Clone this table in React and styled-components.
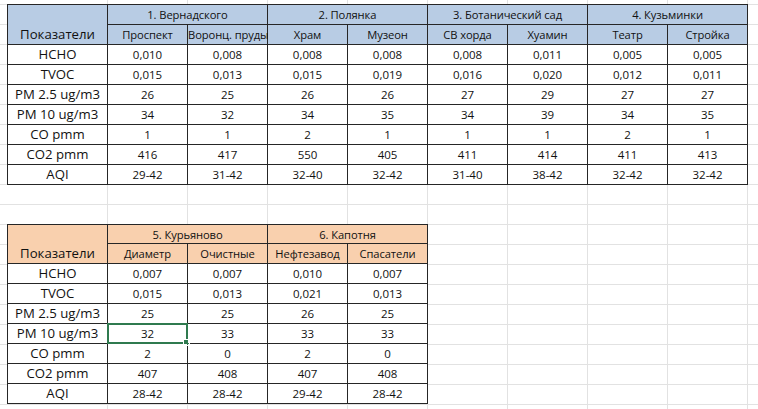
import styled, { createGlobalStyle } from "styled-components";

const GlobalStyle = createGlobalStyle`
  html, body {
    margin: 0;
    padding: 0;
    background: #fff;
  }
`;

const grid = "#e2e2e2";

const Sheet = styled.div`
  width: 758px;
  height: 409px;
  overflow: hidden;
  box-sizing: border-box;
  padding: 4px 0 0 7px;
  display: flex;
  flex-direction: column;
  align-items: flex-start;
  gap: 39px;
  background-color: #fff;
  background-image: linear-gradient(to bottom, ${grid} 1px, transparent 1px),
    linear-gradient(to right, #fff 107px, transparent 107px),
    linear-gradient(to right, ${grid} 1px, transparent 1px);
  background-size: 80px 20px, 100% 100%, 80px 20px;
  background-position: 0 4px, 0 0, 27px 0;
  background-repeat: repeat, no-repeat, repeat;
  font-family: "Open Sans", "Noto Sans", sans-serif;
  color: #111;
`;

const Table = styled.table`
  border-collapse: collapse;
  table-layout: fixed;
  width: ${(p) => 100 + p.$cols * 80}px;
  background: #fff;
`;

const Col = styled.col`
  width: ${(p) => (p.$wide ? "100px" : "80px")};
`;

const Row = styled.tr`
  height: ${(p) => p.$h || 20}px;
`;

const Cell = styled.td`
  position: relative;
  border: 1px solid #262626;
  padding: 0;
  text-align: center;
  vertical-align: middle;
  white-space: nowrap;
  font-weight: 400;
  font-size: ${(p) => (p.$label ? "13.2px" : "11.5px")};
  line-height: 17px;
  background: ${(p) => p.$bg || "#fff"};
`;

const HeadCell = styled(Cell)`
  font-size: ${(p) => (p.$label ? "13.2px" : "11.2px")};
  letter-spacing: ${(p) => (p.$label ? "0" : "-0.1px")};
  vertical-align: ${(p) => (p.$bottom ? "bottom" : "middle")};
  padding-bottom: ${(p) => (p.$bottom ? "1px" : "0")};
`;

const Selection = styled.span`
  position: absolute;
  inset: -1px;
  border: 2px solid #2f7a4f;
  pointer-events: none;

  &::after {
    content: "";
    position: absolute;
    right: -4px;
    bottom: -4px;
    width: 5px;
    height: 5px;
    background: #2f7a4f;
    border: 1px solid #fff;
  }
`;

const labels = ["HCHO", "TVOC", "PM 2.5 ug/m3", "PM 10 ug/m3", "CO pmm", "CO2 pmm", "AQI"];

const tableA = {
  bg: "#b8cce4",
  groups: [
    ["1. Вернадского", "Проспект", "Воронц. пруды"],
    ["2. Полянка", "Храм", "Музеон"],
    ["3. Ботанический сад", "СВ хорда", "Хуамин"],
    ["4. Кузьминки", "Театр", "Стройка"],
  ],
  rows: [
    ["0,010", "0,008", "0,008", "0,008", "0,008", "0,011", "0,005", "0,005"],
    ["0,015", "0,013", "0,015", "0,019", "0,016", "0,020", "0,012", "0,011"],
    ["26", "25", "26", "26", "27", "29", "27", "27"],
    ["34", "32", "34", "35", "34", "39", "34", "35"],
    ["1", "1", "2", "1", "1", "1", "2", "1"],
    ["416", "417", "550", "405", "411", "414", "411", "413"],
    ["29-42", "31-42", "32-40", "32-42", "31-40", "38-42", "32-42", "32-42"],
  ],
};

const tableB = {
  bg: "#f9d0ae",
  firstRow: 19,
  selected: [3, 0],
  groups: [
    ["5. Курьяново", "Диаметр", "Очистные"],
    ["6. Капотня", "Нефтезавод", "Спасатели"],
  ],
  rows: [
    ["0,007", "0,007", "0,010", "0,007"],
    ["0,015", "0,013", "0,021", "0,013"],
    ["25", "25", "26", "25"],
    ["32", "33", "33", "33"],
    ["2", "0", "2", "0"],
    ["407", "408", "407", "408"],
    ["28-42", "28-42", "29-42", "28-42"],
  ],
};

function AirTable({ data }) {
  const sel = data.selected;
  return (
    <Table $cols={data.groups.length * 2}>
      <colgroup>
        <Col $wide />
        {data.groups.flatMap((g) => [<Col key={g[1]} />, <Col key={g[2]} />])}
      </colgroup>
      <thead>
        <Row $h={data.firstRow}>
          <HeadCell as="th" rowSpan={2} $label $bottom $bg={data.bg}>
            Показатели
          </HeadCell>
          {data.groups.map((g) => (
            <HeadCell as="th" key={g[0]} colSpan={2} $bg={data.bg}>
              {g[0]}
            </HeadCell>
          ))}
        </Row>
        <Row>
          {data.groups.flatMap((g) => [
            <HeadCell as="th" key={g[1]} $bg={data.bg}>
              {g[1]}
            </HeadCell>,
            <HeadCell as="th" key={g[2]} $bg={data.bg}>
              {g[2]}
            </HeadCell>,
          ])}
        </Row>
      </thead>
      <tbody>
        {data.rows.map((r, i) => (
          <Row key={labels[i]}>
            <Cell $label>{labels[i]}</Cell>
            {r.map((v, j) => (
              <Cell key={j}>
                {v}
                {sel && sel[0] === i && sel[1] === j && <Selection />}
              </Cell>
            ))}
          </Row>
        ))}
      </tbody>
    </Table>
  );
}

export default function App() {
  return (
    <>
      <GlobalStyle />
      <Sheet>
        <AirTable data={tableA} />
        <AirTable data={tableB} />
      </Sheet>
    </>
  );
}
